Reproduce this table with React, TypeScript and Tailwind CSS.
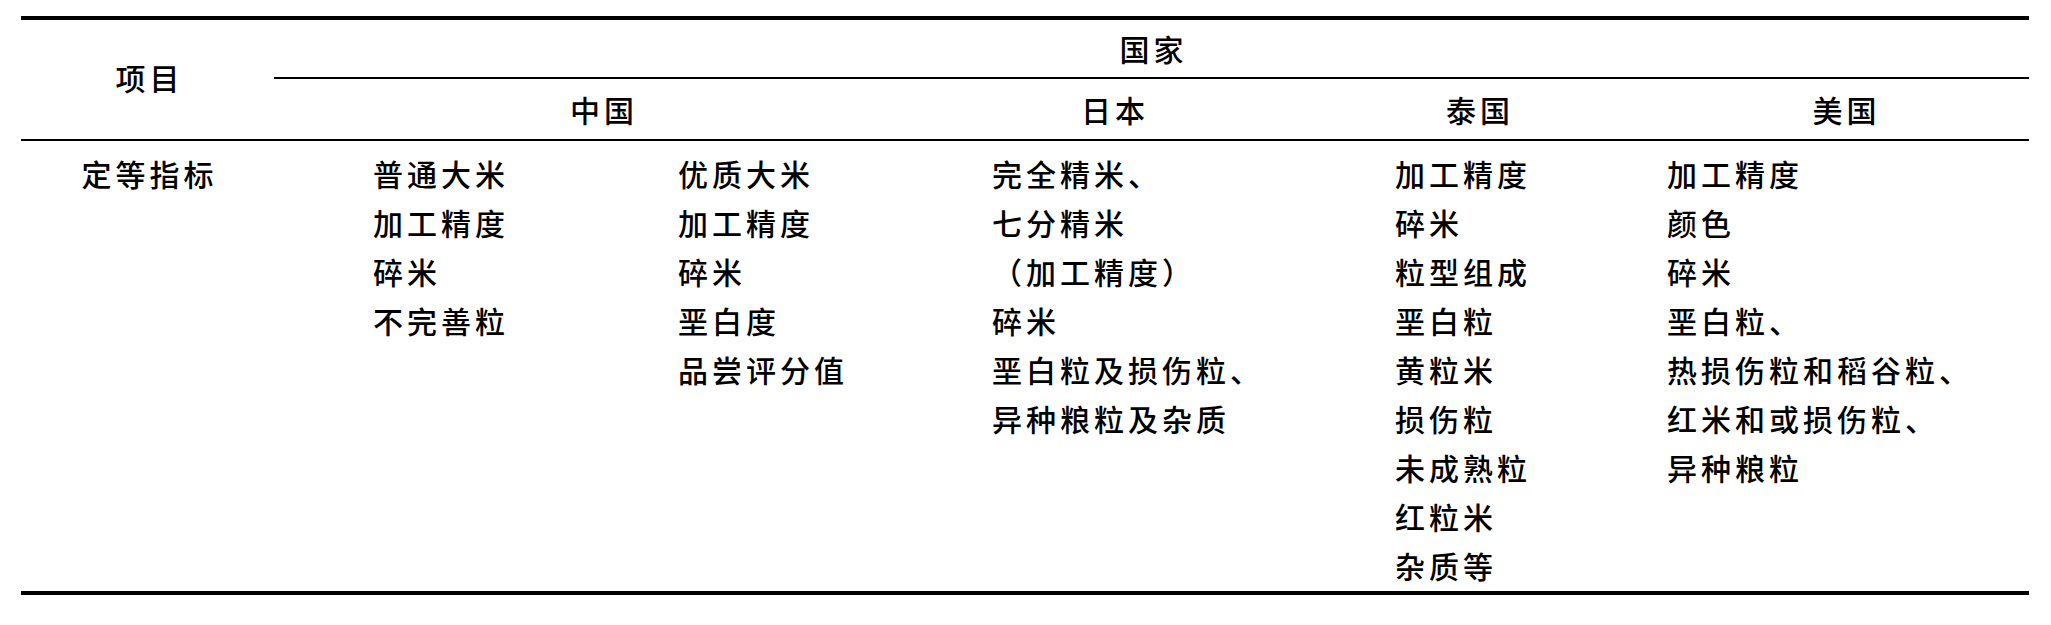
const font = { fontFamily: '"Noto Sans CJK SC", "Noto Sans", sans-serif' }

const china = [
  ["普通大米", "加工精度", "碎米", "不完善粒"],
  ["优质大米", "加工精度", "碎米", "垩白度", "品尝评分值"],
]

const japan = ["完全精米、", "七分精米", "（加工精度）", "碎米", "垩白粒及损伤粒、", "异种粮粒及杂质"]

const thailand = ["加工精度", "碎米", "粒型组成", "垩白粒", "黄粒米", "损伤粒", "未成熟粒", "红粒米", "杂质等"]

const usa = ["加工精度", "颜色", "碎米", "垩白粒、", "热损伤粒和稻谷粒、", "红米和或损伤粒、", "异种粮粒"]

function Lines({ items, className }: { items: string[]; className: string }) {
  return (
    <div className={className}>
      {items.map((t, i) => (
        <div key={i} className="whitespace-nowrap">{t}</div>
      ))}
    </div>
  )
}

export default function App() {
  return (
    <div className="w-[2051px] h-[625px] bg-white pt-4 pl-[21px] text-black" style={font}>
      <div className="w-[2008px] border-t-4 border-b-4 border-black text-[30px] font-medium tracking-[4px] leading-[49px]">
        {/* header */}
        <div className="grid grid-cols-[253px_328px_328px_366px_364px_369px] grid-rows-[59px_60px]">
          <div className="row-span-2 flex items-center justify-center pl-1 pb-1">项目</div>
          <div className="col-span-5 flex items-center justify-center pl-1 border-b-2 border-black">国家</div>
          <div className="col-span-2 flex items-center justify-center pl-1">中国</div>
          <div className="flex items-center justify-center pl-1">日本</div>
          <div className="flex items-center justify-center pl-1">泰国</div>
          <div className="flex items-center justify-center pl-1">美国</div>
        </div>

        {/* body */}
        <div className="grid grid-cols-[253px_328px_328px_366px_364px_369px] border-t-2 border-black pt-2 pb-px">
          <div className="text-center pl-1">定等指标</div>
          <Lines items={china[0]} className="pl-[99px]" />
          <Lines items={china[1]} className="pl-[76px]" />
          <Lines items={japan} className="pl-[62px]" />
          <Lines items={thailand} className="pl-[99px]" />
          <Lines items={usa} className="pl-[7px]" />
        </div>
      </div>
    </div>
  )
}
